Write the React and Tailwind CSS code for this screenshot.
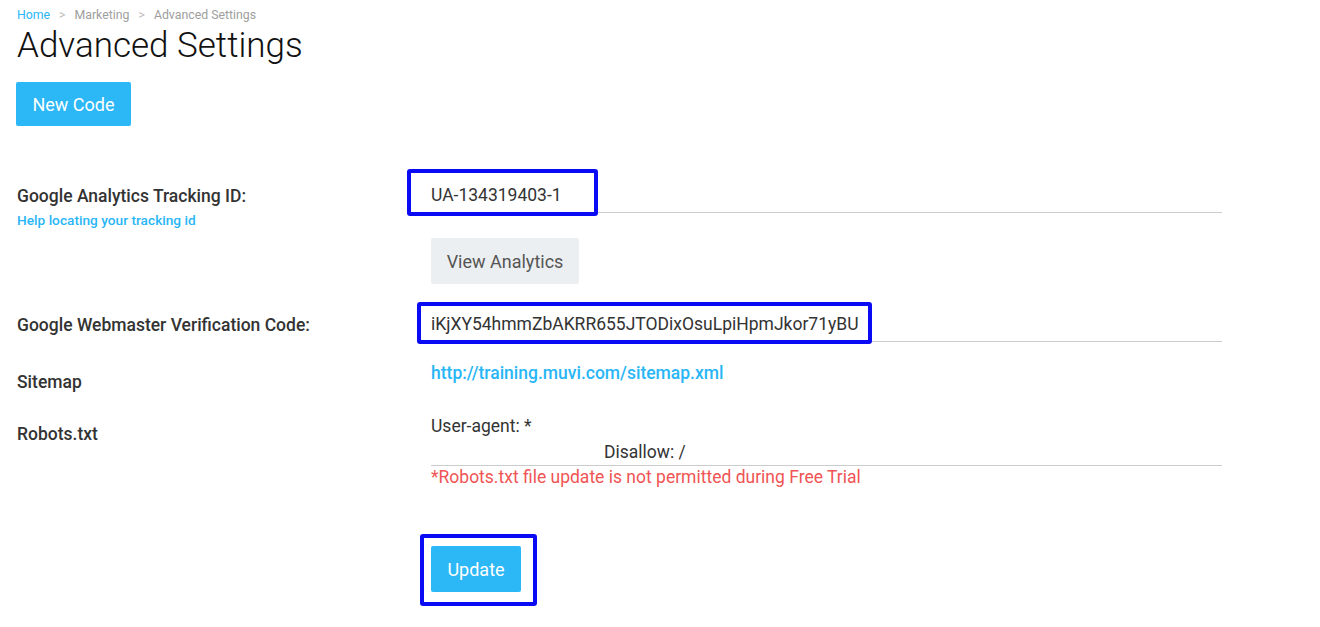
import React from 'react';

const Label = ({ children, className = '' }) => (
  <div className={`text-[17.5px] leading-6 font-medium text-[#333] ${className}`}>{children}</div>
);

const Highlight = ({ className }) => (
  <div className={`absolute border-[4px] border-[#0a0af5] rounded-[3px] pointer-events-none ${className}`} />
);

export default function App() {
  return (
    <div className="relative min-h-[627px] bg-white pl-[16px] font-['Roboto',_'Liberation_Sans',_sans-serif] text-[#333]">
      <div className="h-[24px] pt-[7px] pl-[1px] text-[12.3px] leading-4 text-[#9e9e9e] flex">
        <span className="text-[#29b6f6]">Home</span>
        <span className="mx-[9px] text-[#bbb]">&gt;</span>
        <span>Marketing</span>
        <span className="mx-[9px] text-[#bbb]">&gt;</span>
        <span>Advanced Settings</span>
      </div>
      <h1 className="pt-[2px] text-[35px] leading-[40px] font-light text-[#111] pl-[1px]">Advanced Settings</h1>
      <button className="mt-[16px] h-[44px] w-[115px] rounded-[2px] bg-[#2cb7f6] text-white text-[18px]">New Code</button>

      <div className="mt-[53px] flex">
        <div className="w-[415px] pt-[5px] pl-[1px]">
          <Label>Google Analytics Tracking ID:</Label>
          <div className="mt-[4px] text-[13.7px] leading-4 font-medium text-[#29b6f6]">Help locating your tracking id</div>
        </div>
        <div className="w-[791px]">
          <div className="h-[34px] border-b border-[#ccc] text-[17.5px] leading-[33px]">UA-134319403-1</div>
          <button className="mt-[25px] h-[46px] w-[148px] rounded-[2px] bg-[#eceff1] text-[18px] text-[#555]">View Analytics</button>
        </div>
      </div>

      <div className="mt-[24px] flex">
        <div className="w-[415px] pt-[5px] pl-[1px]">
          <Label>Google Webmaster Verification Code:</Label>
        </div>
        <div className="w-[791px]">
          <div className="h-[34px] border-b border-[#ccc] text-[17.5px] leading-[33px]">iKjXY54hmmZbAKRR655JTODixOsuLpiHpmJkor71yBU</div>
        </div>
      </div>

      <div className="mt-[19px] flex">
        <div className="w-[415px] pt-[9px] pl-[1px]">
          <Label>Sitemap</Label>
        </div>
        <div className="w-[791px] text-[17.5px] leading-6 font-medium text-[#29b6f6]">http://training.muvi.com/sitemap.xml</div>
      </div>

      <div className="mt-[19px] flex">
        <div className="w-[415px] pt-[9px] pl-[1px]">
          <Label>Robots.txt</Label>
        </div>
        <div className="w-[791px]">
          <div className="border-b border-[#ccc] text-[17.5px] leading-[26px]">
            <div>User-agent: *</div>
            <div className="pl-[173px]">Disallow: /</div>
          </div>
          <div className="text-[17.5px] leading-[22px] text-[#f05454]">*Robots.txt file update is not permitted during Free Trial</div>
          <button className="mt-[58px] h-[46px] w-[90px] rounded-[2px] bg-[#2cb7f6] text-white text-[18px]">Update</button>
        </div>
      </div>

      <Highlight className="left-[407px] top-[169px] w-[191px] h-[47px]" />
      <Highlight className="left-[417px] top-[302px] w-[455px] h-[42px]" />
      <Highlight className="left-[420px] top-[534px] w-[117px] h-[72px]" />
    </div>
  );
}
